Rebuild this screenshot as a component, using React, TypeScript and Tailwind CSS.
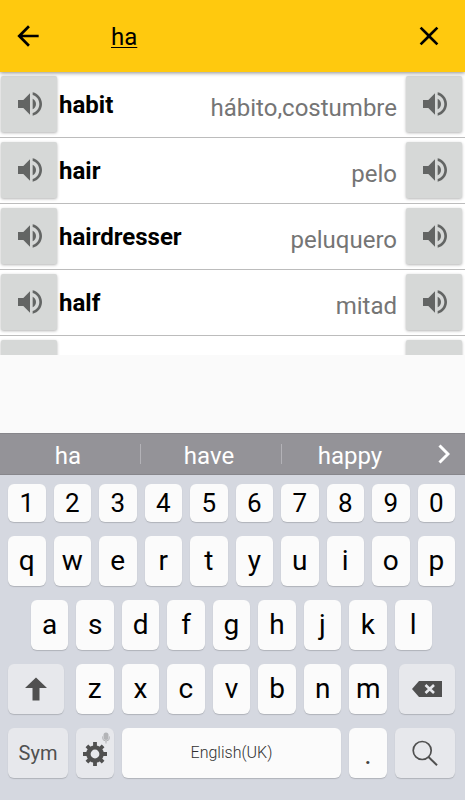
import React, { useState } from "react";
import { MdArrowBack, MdClose, MdVolumeUp } from "react-icons/md";

type Entry = {
  id: number;
  english: string;
  spanish: string;
};

const entries: Entry[] = [
  { id: 1, english: "habit", spanish: "hábito,costumbre" },
  { id: 2, english: "hair", spanish: "pelo" },
  { id: 3, english: "hairdresser", spanish: "peluquero" },
  { id: 4, english: "half", spanish: "mitad" },
  { id: 5, english: "", spanish: "" },
];

const numbers = ["1", "2", "3", "4", "5", "6", "7", "8", "9", "0"];
const topRow = ["q", "w", "e", "r", "t", "y", "u", "i", "o", "p"];
const middleRow = ["a", "s", "d", "f", "g", "h", "j", "k", "l"];
const bottomRow = ["z", "x", "c", "v", "b", "n", "m"];
const suggestions = ["ha", "have", "happy"];

const lightKey =
  "flex items-center justify-center rounded-md bg-[#fbfbfb] text-black shadow-[0_1px_1px_#b0b3ba]";
const greyKey =
  "flex items-center justify-center rounded-md bg-[#e7e8ec] text-[#505050] shadow-[0_1px_1px_#b0b3ba]";

const SpeakButton = ({ label }: { label: string }) => (
  <button
    type="button"
    aria-label={label}
    className="flex size-14 shrink-0 items-center justify-center rounded-xs bg-[#d6d8d7] pl-px text-[#636564] shadow-[0_1px_3px_rgba(0,0,0,0.3)]"
  >
    <MdVolumeUp size={32} />
  </button>
);

const ShiftIcon = () => (
  <svg width="22" height="24" viewBox="0 0 22 24" fill="currentColor">
    <path d="M11 0.5 L22 11 H14.5 V23.5 H7.5 V11 H0 Z" />
  </svg>
);

const BackspaceIcon = () => (
  <svg width="30" height="16" viewBox="0 0 30 16">
    <path d="M0 8 L7 0 H30 V16 H7 Z" fill="currentColor" />
    <path d="M13.5 4 L22 12 M22 4 L13.5 12" stroke="#e7e8ec" strokeWidth="2.6" />
  </svg>
);

const GearIcon = () => (
  <svg width="24" height="24" viewBox="0 0 24 24" stroke="currentColor" fill="none">
    <circle cx="12" cy="12" r="6.6" strokeWidth="4.4" />
    <g strokeWidth="3.8">
      <path d="M12 0 V4.5 M12 19.5 V24 M0 12 H4.5 M19.5 12 H24" />
      <path d="M3.9 3.9 L6.7 6.7 M17.3 17.3 L20.1 20.1 M3.9 20.1 L6.7 17.3 M17.3 6.7 L20.1 3.9" />
    </g>
  </svg>
);

const MicIcon = () => (
  <svg width="8" height="12" viewBox="0 0 8 12" fill="none" stroke="#b3b4b7">
    <rect x="1.5" y="0.5" width="5" height="7.5" rx="2.5" fill="#b3b4b7" stroke="none" />
    <path d="M0.5 4.5 V5.5 A3.5 3.5 0 0 0 7.5 5.5 V4.5 M4 9 V11.5" />
  </svg>
);

const SearchIcon = () => (
  <svg width="26" height="26" viewBox="0 0 26 26" fill="none" stroke="currentColor">
    <circle cx="10.2" cy="10.5" r="9" strokeWidth="1.7" />
    <path d="M16.5 17 L25 25.2" strokeWidth="2" />
  </svg>
);

const ChevronIcon = () => (
  <svg width="12" height="20" viewBox="0 0 12 20" fill="none" stroke="currentColor">
    <path d="M1.5 1.5 L10 10 L1.5 18.5" strokeWidth="3" />
  </svg>
);

export default function App() {
  const [search, setSearch] = useState("ha");

  const handleSearchChange = (e: React.ChangeEvent<HTMLInputElement>) => {
    setSearch(e.target.value);
  };

  const addText = (text: string) => setSearch(search + text);

  const renderKeys = (keys: string[]) =>
    keys.map((key) => (
      <button
        key={key}
        type="button"
        onClick={() => addText(key)}
        className={`${lightKey} h-full min-w-0 flex-1`}
      >
        {key}
      </button>
    ));

  return (
    <div className="flex min-h-screen flex-col bg-[#fafafa] font-['Roboto',sans-serif]">
      <header className="relative z-10 flex h-18 items-center bg-[#ffc90e] pr-5 pl-3 text-black shadow-[0_1px_4px_rgba(0,0,0,0.45)]">
        <button type="button" aria-label="Back">
          <MdArrowBack size={32} />
        </button>
        <input
          type="text"
          aria-label="Search"
          value={search}
          onChange={handleSearchChange}
          className="ml-16 min-w-0 flex-1 pt-0.5 pl-[3px] text-2xl underline decoration-1 underline-offset-2 outline-none"
        />
        <button type="button" aria-label="Clear" onClick={() => setSearch("")}>
          <MdClose size={32} />
        </button>
      </header>

      <ul className="h-[283px] overflow-hidden bg-white">
        {entries.map((entry) => (
          <li
            key={entry.id}
            className="flex items-start border-b border-[#bcbcbc] pt-1 pr-[3px] pb-[5px] pl-px"
          >
            <SpeakButton label={`Listen in English ${entry.english}`} />
            <p className="pt-[13px] pl-0.5 text-2xl font-bold text-black">{entry.english}</p>
            <p className="flex-1 pt-4 pr-[9px] text-right text-2xl text-[#757575]">
              {entry.spanish}
            </p>
            <SpeakButton label={`Listen in Spanish ${entry.spanish}`} />
          </li>
        ))}
      </ul>

      <div className="mt-auto">
        <div className="flex h-[42px] items-center border-y border-[#87868b] bg-[#949398] text-white">
          {suggestions.map((word, index) => (
            <button
              key={word}
              type="button"
              onClick={() => setSearch(word)}
              className={
                index < 2
                  ? "h-5 flex-1 border-r border-[#b3b2b7] pt-0.5 pr-1 text-2xl leading-5"
                  : "h-5 flex-1 pt-0.5 text-2xl leading-5"
              }
            >
              {word}
            </button>
          ))}
          <button type="button" aria-label="More suggestions" className="pr-[15px] pl-5">
            <ChevronIcon />
          </button>
        </div>

        <div className="flex flex-col gap-3.5 bg-[#d5d8e0] pt-[9px] pr-2.5 pb-[22px] pl-2 text-[28px] leading-8">
          <div className="flex h-[38px] gap-2 text-[26px]">{renderKeys(numbers)}</div>
          <div className="flex h-[50px] gap-2">{renderKeys(topRow)}</div>
          <div className="flex h-[50px] gap-2 px-[23px]">{renderKeys(middleRow)}</div>
          <div className="flex h-[50px] gap-3">
            <button type="button" aria-label="Shift" className={`${greyKey} w-14`}>
              <ShiftIcon />
            </button>
            <div className="flex flex-1 gap-2">{renderKeys(bottomRow)}</div>
            <button
              type="button"
              aria-label="Backspace"
              onClick={() => setSearch(search.slice(0, -1))}
              className={`${greyKey} w-14`}
            >
              <BackspaceIcon />
            </button>
          </div>
          <div className="flex h-[50px] gap-2">
            <button type="button" className={`${greyKey} w-15 text-xl`}>
              Sym
            </button>
            <button
              type="button"
              aria-label="Settings"
              className={`${greyKey} relative w-[38px] pt-0.5`}
            >
              <GearIcon />
              <span className="absolute top-1 right-1">
                <MicIcon />
              </span>
            </button>
            <button
              type="button"
              onClick={() => addText(" ")}
              className={`${lightKey} flex-1 text-base`}
            >
              <span className="font-light text-[#303030]">English(UK)</span>
            </button>
            <button
              type="button"
              onClick={() => addText(".")}
              className={`${lightKey} w-[38px] pt-1`}
            >
              <span className="text-[#404040]">.</span>
            </button>
            <button type="button" aria-label="Search" className={`${greyKey} w-15`}>
              <SearchIcon />
            </button>
          </div>
        </div>
      </div>
    </div>
  );
}
